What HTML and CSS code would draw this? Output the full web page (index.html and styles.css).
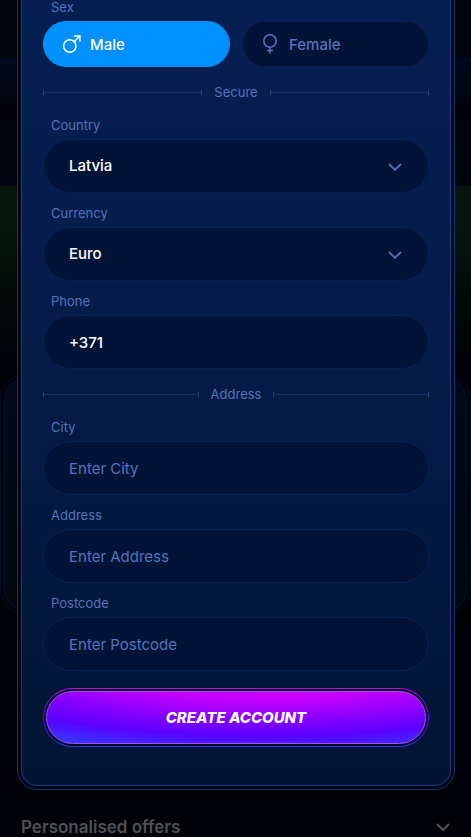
FILE: index.html
```
<!DOCTYPE html>
<html lang="en">
<head>
    <meta charset="UTF-8">
    <meta name="viewport" content="width=device-width, initial-scale=1.0">
    <title>Create account</title>
    <link rel="stylesheet" href="styles.css">
</head>
<body>
    <div class="backdrop">
        <div class="backdrop-field"></div>
        <div class="backdrop-card"></div>
    </div>

    <main class="modal">
        <form class="modal-panel">
            <fieldset class="sex">
                <legend class="label">Sex</legend>
                <div class="sex-options">
                    <label class="sex-option">
                        <input type="radio" name="sex" value="male" checked>
                        <svg width="20" height="20" viewBox="0 0 20 20" fill="none" stroke="currentColor" stroke-width="1.5">
                            <circle cx="7.8" cy="12" r="6.2"/>
                            <path d="M12.3 7.5 17.6 2.2M12 1.9h5.9v5.6"/>
                        </svg>
                        Male
                    </label>
                    <label class="sex-option">
                        <input type="radio" name="sex" value="female">
                        <svg width="20" height="20" viewBox="0 0 20 20" fill="none" stroke="currentColor" stroke-width="1.5">
                            <circle cx="9" cy="7" r="6.2"/>
                            <path d="M9 13.2V19.6M6 16.5h6"/>
                        </svg>
                        Female
                    </label>
                </div>
            </fieldset>

            <div class="divider"><span>Secure</span></div>

            <div class="field">
                <label class="label" for="country">Country</label>
                <select class="control" id="country" name="country">
                    <option>Latvia</option>
                </select>
                <svg class="chevron" width="14" height="8" viewBox="0 0 14 8" fill="none" stroke="currentColor" stroke-width="1.8"><path d="m1 1 6 5.8L13 1"/></svg>
            </div>
            <div class="field">
                <label class="label" for="currency">Currency</label>
                <select class="control" id="currency" name="currency">
                    <option>Euro</option>
                </select>
                <svg class="chevron" width="14" height="8" viewBox="0 0 14 8" fill="none" stroke="currentColor" stroke-width="1.8"><path d="m1 1 6 5.8L13 1"/></svg>
            </div>
            <div class="field">
                <label class="label" for="phone">Phone</label>
                <input class="control" type="tel" id="phone" name="phone" value="+371">
            </div>

            <div class="divider"><span>Address</span></div>

            <div class="field">
                <label class="label" for="city">City</label>
                <input class="control" type="text" id="city" name="city" placeholder="Enter City">
            </div>
            <div class="field">
                <label class="label" for="address">Address</label>
                <input class="control" type="text" id="address" name="address" placeholder="Enter Address">
            </div>
            <div class="field">
                <label class="label" for="postcode">Postcode</label>
                <input class="control" type="text" id="postcode" name="postcode" placeholder="Enter Postcode">
            </div>

            <div class="submit-ring">
                <button class="submit" type="submit">Create account</button>
            </div>
        </form>
    </main>

    <section class="offers">
        <h2>Personalised offers</h2>
        <svg width="14" height="9" viewBox="0 0 14 9" fill="none" stroke="currentColor" stroke-width="2"><path d="m1 1 6 6 6-6"/></svg>
    </section>
</body>
</html>
```

FILE: styles.css
```
:root {
    --text-muted: #5474b8;
    --line: #173e86;
    --field-bg: #011437;
    --field-border: #042355;
    --accent: #0090ff;
}
* {
    box-sizing: border-box;
}
body {
    font-family: Inter, "Liberation Sans", sans-serif;
    background-color: #00020a;
    margin: 0;
    min-height: 100vh;
    overflow: hidden;
    color: #fff;
}

/* dimmed page behind the modal */
.backdrop {
    position: absolute;
    inset: 0;
    z-index: -1;
    background: linear-gradient(#01060c, #01050d 57px, #000a1c 58px, #00030c 110px, #01050e 186px, #000208 190px);
}
.backdrop-field {
    position: absolute;
    top: 186px;
    width: 100%;
    height: 190px;
    background: linear-gradient(#05170f, #04140c 60px, #010907 120px, #00020a);
}
.backdrop-card {
    position: absolute;
    top: 375px;
    left: 0;
    right: 0;
    height: 239px;
    border: 1px solid #020b20;
    border-radius: 24px;
    background: linear-gradient(#010a1c, #01060c) padding-box;
    box-shadow: inset 0 0 0 3px #00030c, inset 0 0 0 4px #021029;
}

.modal {
    margin: -26px 16px 0 17px;
    padding: 3px;
    border: 1px solid #14336f;
    border-radius: 20px;
    background-color: #000413;
}
.modal-panel {
    padding: 20px 21px 38px;
    border: 1px solid var(--line);
    border-radius: 16px;
    background: linear-gradient(#061f52, #051c4b 40%, #03183f 70%, #011433);
}
.label {
    display: block;
    padding: 0 8px;
    margin-bottom: 6px;
    font-size: 13px;
    line-height: 16px;
    color: var(--text-muted);
}

.sex {
    margin: 0;
    padding: 0;
    border: 0;
}
.sex-options {
    display: grid;
    grid-template-columns: 1fr 1fr;
    gap: 12px;
}
.sex-option {
    display: flex;
    align-items: center;
    gap: 8px;
    height: 46px;
    padding: 0 18px;
    border: 1px solid #061f50;
    border-radius: 23px;
    background-color: var(--field-bg);
    color: var(--text-muted);
    font-size: 15px;
    font-weight: 500;
    cursor: pointer;
}
.sex-option:has(input:checked) {
    border-color: var(--accent);
    background-color: var(--accent);
    color: #fff;
}
.sex-option input {
    position: absolute;
    opacity: 0;
}

.divider {
    display: flex;
    align-items: center;
    gap: 12px;
    margin: 17px 0;
    font-size: 13px;
    line-height: 16px;
    color: var(--text-muted);
}
.divider::before,
.divider::after {
    content: "";
    flex: 1;
    height: 5px;
    border: solid #29477f;
    border-width: 0 1px;
    background: linear-gradient(#17356d, #17356d) center / 100% 1px no-repeat;
}

.field {
    position: relative;
    margin-bottom: 12px;
}
.control {
    display: block;
    width: 100%;
    height: 54px;
    padding: 0 25px;
    border: 1px solid var(--field-border);
    border-radius: 27px;
    outline: none;
    appearance: none;
    background-color: var(--field-bg);
    color: #fff;
    font: 500 15px/20px Inter, "Liberation Sans", sans-serif;
}
.control::placeholder {
    color: var(--text-muted);
    font-weight: 400;
    opacity: 1;
}
.chevron {
    position: absolute;
    right: 27px;
    bottom: 22px;
    color: var(--text-muted);
    pointer-events: none;
}

.submit-ring {
    margin-top: 17px;
    padding: 2px;
    border: 1px solid transparent;
    border-radius: 30px;
    background:
        linear-gradient(#00041a, #00041a) padding-box,
        linear-gradient(#c000ff, #5a00ff 60%, #2a3cff) border-box;
}
.submit {
    display: block;
    width: 100%;
    height: 53px;
    border: 1px solid #a64dff;
    border-radius: 27px;
    background: radial-gradient(123% 200% at 58% -60%, #c800ff 36%, #5a00ff 73%, #3040ff 92%);
    color: #fff;
    font: italic 800 15px/20px Inter, "Liberation Sans", sans-serif;
    text-transform: uppercase;
    cursor: pointer;
}

.offers {
    display: flex;
    align-items: center;
    justify-content: space-between;
    margin: 5px 21px 0;
    padding-top: 20px;
    border-top: 1px solid #03060f;
    color: #505154;
}
.offers h2 {
    margin: 0;
    font-size: 17px;
    font-weight: 600;
    line-height: 22px;
}
```
